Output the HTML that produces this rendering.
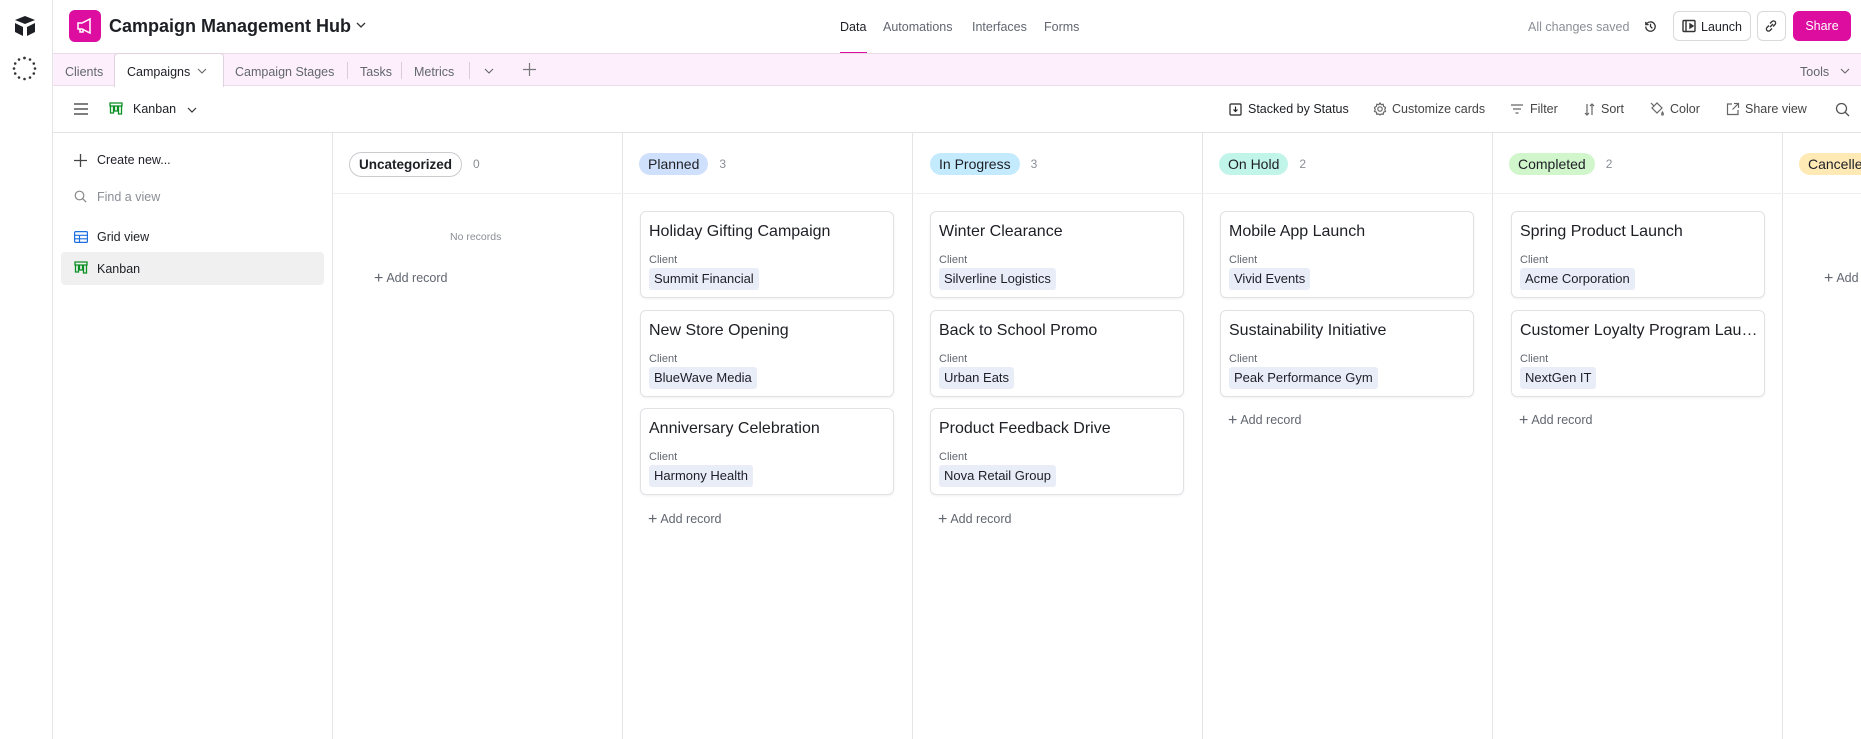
<!DOCTYPE html>
<html><head><meta charset="utf-8">
<style>
*{box-sizing:border-box;margin:0;padding:0}
body{width:1861px;height:739px;overflow:hidden;background:#fff;font-family:"Liberation Sans",sans-serif;color:#1d1f25;position:relative}
.a{position:absolute;white-space:nowrap}
.g{color:#616670}
.card{position:absolute;width:254px;height:87px;border:1px solid #e1e2e5;border-radius:6px;background:#fff;box-shadow:0 1px 2px rgba(0,0,0,.06)}
.card .t{position:absolute;left:8px;top:11px;font-size:16px;color:#1d1f25;width:238px;overflow:hidden;text-overflow:ellipsis;white-space:nowrap}
.card .l{position:absolute;left:8px;top:42px;font-size:11px;color:#616670}
.card .p{position:absolute;left:8px;top:56px;height:22px;line-height:22px;padding:0 5px;background:#e9edf8;border-radius:3px;font-size:13px;white-space:nowrap}
.hd{position:absolute;top:152px;height:24px;display:flex;align-items:center;white-space:nowrap}
.hp{height:22px;line-height:22px;padding:0 9px;border-radius:11px;font-size:14px}
.cnt{margin-left:11px;font-size:12px;color:#8a8e96}
.vl{position:absolute;top:133px;bottom:0;width:1px;background:#e3e4e6}
.add{position:absolute;font-size:12.5px;color:#616670;white-space:nowrap}
.add b{font-weight:normal;font-size:16px;margin-right:3px;vertical-align:-1px}
.tb{font-size:12.5px;color:#444;top:102px}
</style></head><body>
<div class="a" style="left:0;top:0;width:53px;height:739px;border-right:1px solid #e3e4e6"></div>
<svg class="a" style="left:13px;top:15px" width="24" height="22" viewBox="0 0 24 22"><path d="M12 1L2 5l10 4 10-4z" fill="#1d1f25"/><path d="M2 8v9l8 4v-9zM22 8v9l-8 4v-9z" fill="#1d1f25"/></svg>
<svg class="a" style="left:12px;top:56px" width="25" height="25" viewBox="0 0 25 25"><g fill="#333"><circle cx="12.5" cy="2" r="1.4"/><circle cx="18" cy="3.5" r="1.3"/><circle cx="21.8" cy="7.5" r="1.3"/><circle cx="23" cy="12.5" r="1.3"/><circle cx="21.8" cy="17.5" r="1.3"/><circle cx="18" cy="21.5" r="1.3"/><circle cx="12.5" cy="23" r="1.3"/><circle cx="7" cy="21.5" r="1.3"/><circle cx="3.2" cy="17.5" r="1.3"/><circle cx="2" cy="12.5" r="1.3"/><circle cx="3.2" cy="7.5" r="1.3"/><circle cx="7" cy="3.5" r="1.3"/></g></svg>
<div class="a" style="left:69px;top:10px;width:32px;height:32px;background:#dd0da0;border-radius:6px"></div>
<svg class="a" style="left:75px;top:16px" width="20" height="20" viewBox="0 0 20 20" fill="none" stroke="#fff" stroke-width="1.5"><path d="M3 7h4l8-4v14l-8-4H3z"/><path d="M5 13v3h3v-3"/></svg>
<div class="a" style="left:109px;top:16px;font-size:18px;font-weight:bold">Campaign Management Hub</div>
<svg class="a" style="left:356px;top:21px" width="10" height="8" viewBox="0 0 10 8"><path d="M1 2l4 4 4-4" fill="none" stroke="#333" stroke-width="1.3"/></svg>
<div class="a" style="left:840px;top:20px;font-size:12.5px">Data</div>
<div class="a g" style="left:883px;top:20px;font-size:12.5px">Automations</div>
<div class="a g" style="left:972px;top:20px;font-size:12.5px">Interfaces</div>
<div class="a g" style="left:1044px;top:20px;font-size:12.5px">Forms</div>
<div class="a" style="left:840px;top:52px;width:27px;height:2px;background:#dd0da0"></div>
<div class="a" style="left:1528px;top:20px;font-size:12.5px;color:#8a8e96">All changes saved</div>
<svg class="a" style="left:1643px;top:19px" width="15" height="15" viewBox="0 0 16 16" fill="none" stroke="#333" stroke-width="1.4"><path d="M3 8a5 5 0 1 0 1.5-3.5L3 6M3 3v3h3M8 5v3l2 2"/></svg>
<div class="a" style="left:1673px;top:11px;width:78px;height:30px;border:1px solid #d8d9dc;border-radius:6px"></div>
<svg class="a" style="left:1682px;top:19px" width="14" height="14" viewBox="0 0 14 14" fill="none" stroke="#333" stroke-width="1.4"><rect x="1" y="1.5" width="12" height="11" rx="1"/><path d="M4 1.5v11"/><path d="M8 5l3 2-3 2z" fill="#333"/></svg>
<div class="a" style="left:1701px;top:20px;font-size:12.5px">Launch</div>
<div class="a" style="left:1757px;top:11px;width:29px;height:30px;border:1px solid #d8d9dc;border-radius:6px"></div>
<svg class="a" style="left:1764px;top:19px" width="14" height="14" viewBox="0 0 14 14" fill="none" stroke="#333" stroke-width="1.3"><path d="M6 8l3-3M5 6.5L3 8.5a2.1 2.1 0 0 0 3 3L8 9.5M9 7.5l2-2a2.1 2.1 0 0 0-3-3L6 4.5"/></svg>
<div class="a" style="left:1793px;top:11px;width:58px;height:30px;background:#dd0da0;border-radius:6px;color:#fff;font-size:12.5px;text-align:center;line-height:30px">Share</div>
<div class="a" style="left:53px;top:53px;width:1808px;height:33px;background:#fdf0fc;border-top:1px solid #ecdbe9;border-bottom:1px solid #ecdbe9"></div>
<div class="a" style="left:114px;top:53px;width:110px;height:34px;background:#fff;border:1px solid #e0d2de;border-bottom:none;border-radius:4px 4px 0 0"></div>
<div class="a g" style="left:65px;top:65px;font-size:12.5px">Clients</div>
<div class="a" style="left:127px;top:65px;font-size:12.5px">Campaigns</div>
<svg class="a" style="left:197px;top:68px" width="10" height="7" viewBox="0 0 10 7"><path d="M1 1l4 4 4-4" fill="none" stroke="#666" stroke-width="1.1"/></svg>
<div class="a g" style="left:235px;top:65px;font-size:12.5px">Campaign Stages</div>
<div class="a" style="left:347px;top:62px;width:1px;height:17px;background:#dccbd9"></div>
<div class="a g" style="left:360px;top:65px;font-size:12.5px">Tasks</div>
<div class="a" style="left:401px;top:62px;width:1px;height:17px;background:#dccbd9"></div>
<div class="a g" style="left:414px;top:65px;font-size:12.5px">Metrics</div>
<div class="a" style="left:469px;top:62px;width:1px;height:17px;background:#dccbd9"></div>
<svg class="a" style="left:484px;top:68px" width="10" height="7" viewBox="0 0 10 7"><path d="M1 1l4 4 4-4" fill="none" stroke="#666" stroke-width="1.1"/></svg>
<svg class="a" style="left:523px;top:63px" width="13" height="13" viewBox="0 0 13 13"><path d="M6.5 0v13M0 6.5h13" stroke="#777" stroke-width="1.2"/></svg>
<div class="a g" style="left:1800px;top:65px;font-size:12.5px">Tools</div>
<svg class="a" style="left:1840px;top:68px" width="10" height="7" viewBox="0 0 10 7"><path d="M1 1l4 4 4-4" fill="none" stroke="#666" stroke-width="1.1"/></svg>
<div class="a" style="left:53px;top:132px;width:1808px;height:1px;background:#e3e4e6"></div>
<svg class="a" style="left:74px;top:103px" width="14" height="12" viewBox="0 0 14 12"><path d="M0 1h14M0 6h14M0 11h14" stroke="#555" stroke-width="1.4"/></svg>
<svg class="a" style="left:109px;top:102px" width="14" height="14" viewBox="0 0 14 14" fill="none" stroke="#0a8f22" stroke-width="1.3"><path d="M1 1h12v3H1zM1.5 4v7h3V4M5.5 4v5h3V4M9.5 4v8h3V4"/></svg>
<div class="a" style="left:133px;top:102px;font-size:12.5px">Kanban</div>
<svg class="a" style="left:187px;top:107px" width="10" height="7" viewBox="0 0 10 7"><path d="M1 1l4 4 4-4" fill="none" stroke="#333" stroke-width="1.2"/></svg>
<svg class="a" style="left:1229px;top:103px" width="13" height="13" viewBox="0 0 13 13" fill="none" stroke="#222" stroke-width="1.2"><rect x="1" y="1" width="11" height="11" rx="1"/><path d="M6.5 3.5v5M4.5 6.5l2 2 2-2"/></svg>
<div class="a tb" style="left:1248px;color:#1d1f25">Stacked by Status</div>
<svg class="a" style="left:1373px;top:102px" width="14" height="14" viewBox="0 0 14 14" fill="none" stroke="#666" stroke-width="1.2"><circle cx="7" cy="7" r="2.2"/><path d="M7 1l1.2 1.6 2-.3.3 2L12.5 5.5 11.8 7.4 12.5 9.3 10.5 10.3l-.3 2-2-.3L7 13 5.8 12l-2 .3-.3-2L1.5 9.3 2.2 7.4 1.5 5.5 3.5 4.3l.3-2 2 .3z"/></svg>
<div class="a tb g" style="left:1392px">Customize cards</div>
<svg class="a" style="left:1510px;top:104px" width="14" height="10" viewBox="0 0 14 10"><path d="M1 1h12M3 5h8M5.5 9h3" stroke="#666" stroke-width="1.3"/></svg>
<div class="a tb g" style="left:1530px">Filter</div>
<svg class="a" style="left:1583px;top:103px" width="13" height="13" viewBox="0 0 13 13" fill="none" stroke="#666" stroke-width="1.2"><path d="M4 1v11M2 10l2 2 2-2M9 12V1M7 3l2-2 2 2"/></svg>
<div class="a tb g" style="left:1601px">Sort</div>
<svg class="a" style="left:1650px;top:102px" width="15" height="15" viewBox="0 0 15 15" fill="none" stroke="#666" stroke-width="1.2"><path d="M2 6l5-5 5 5-5 5zM1 1l3 3M12.5 10c1 1.5 1 3 0 3s-1-1.5 0-3z"/></svg>
<div class="a tb g" style="left:1670px">Color</div>
<svg class="a" style="left:1726px;top:102px" width="14" height="14" viewBox="0 0 14 14" fill="none" stroke="#666" stroke-width="1.2"><path d="M6 2H1.5v10.5H12V8M8 1.5h4.5V6M12.5 1.5L6.5 7.5"/></svg>
<div class="a tb g" style="left:1745px">Share view</div>
<svg class="a" style="left:1835px;top:102px" width="15" height="15" viewBox="0 0 15 15" fill="none" stroke="#555" stroke-width="1.3"><circle cx="6.5" cy="6.5" r="5"/><path d="M10 10l4 4"/></svg>
<svg class="a" style="left:74px;top:154px" width="13" height="13" viewBox="0 0 13 13"><path d="M6.5 0v13M0 6.5h13" stroke="#444" stroke-width="1.3"/></svg>
<div class="a" style="left:97px;top:153px;font-size:12.5px">Create new...</div>
<svg class="a" style="left:74px;top:190px" width="13" height="13" viewBox="0 0 13 13" fill="none" stroke="#888" stroke-width="1.2"><circle cx="5.5" cy="5.5" r="4.3"/><path d="M8.7 8.7l3.5 3.5"/></svg>
<div class="a" style="left:97px;top:190px;font-size:12.5px;color:#8a8e96">Find a view</div>
<svg class="a" style="left:74px;top:231px" width="14" height="12" viewBox="0 0 14 12" fill="none" stroke="#1f6fe0" stroke-width="1.2"><rect x=".6" y=".6" width="12.8" height="10.8" rx="1"/><path d="M.6 4.3h12.8M.6 7.8h12.8M5.5 4.3v7"/></svg>
<div class="a" style="left:97px;top:230px;font-size:12.5px">Grid view</div>
<div class="a" style="left:61px;top:252px;width:263px;height:33px;background:#f0f0f1;border-radius:4px"></div>
<svg class="a" style="left:74px;top:261px" width="14" height="14" viewBox="0 0 14 14" fill="none" stroke="#0a8f22" stroke-width="1.3"><path d="M1 1h12v3H1zM1.5 4v7h3V4M5.5 4v5h3V4M9.5 4v8h3V4"/></svg>
<div class="a" style="left:97px;top:262px;font-size:12.5px">Kanban</div>
<div class="vl" style="left:332px"></div>
<div class="vl" style="left:622px"></div>
<div class="vl" style="left:912px"></div>
<div class="vl" style="left:1202px"></div>
<div class="vl" style="left:1492px"></div>
<div class="vl" style="left:1782px"></div>
<div class="a" style="left:333px;top:193px;width:1528px;height:1px;background:#eeeff1"></div>

<div class="hd" style="left:349px"><div class="hp" style="height:25px;line-height:23px;border:1px solid #c9cbcf;border-radius:13px;font-weight:bold;font-size:13.5px">Uncategorized</div><div class="cnt">0</div></div>
<div class="a" style="left:450px;top:231px;font-size:10.5px;color:#8a8e96">No records</div>
<div class="add" style="left:374px;top:270px"><b>+</b>Add record</div>

<div class="hd" style="left:639px"><div class="hp" style="background:#cfe0fc">Planned</div><div class="cnt">3</div></div>
<div class="hd" style="left:930px"><div class="hp" style="background:#c4ebfd">In Progress</div><div class="cnt">3</div></div>
<div class="hd" style="left:1219px"><div class="hp" style="background:#c2f5ea">On Hold</div><div class="cnt">2</div></div>
<div class="hd" style="left:1509px"><div class="hp" style="background:#d1f6cb">Completed</div><div class="cnt">2</div></div>
<div class="hd" style="left:1799px"><div class="hp" style="background:#ffe9b5;padding-right:20px">Cancelled</div></div>

<div class="card" style="left:640px;top:211px"><div class="t">Holiday Gifting Campaign</div><div class="l">Client</div><div class="p">Summit Financial</div></div>
<div class="card" style="left:640px;top:310px"><div class="t">New Store Opening</div><div class="l">Client</div><div class="p">BlueWave Media</div></div>
<div class="card" style="left:640px;top:408px"><div class="t">Anniversary Celebration</div><div class="l">Client</div><div class="p">Harmony Health</div></div>
<div class="add" style="left:648px;top:511px"><b>+</b>Add record</div>

<div class="card" style="left:930px;top:211px"><div class="t">Winter Clearance</div><div class="l">Client</div><div class="p">Silverline Logistics</div></div>
<div class="card" style="left:930px;top:310px"><div class="t">Back to School Promo</div><div class="l">Client</div><div class="p">Urban Eats</div></div>
<div class="card" style="left:930px;top:408px"><div class="t">Product Feedback Drive</div><div class="l">Client</div><div class="p">Nova Retail Group</div></div>
<div class="add" style="left:938px;top:511px"><b>+</b>Add record</div>

<div class="card" style="left:1220px;top:211px"><div class="t">Mobile App Launch</div><div class="l">Client</div><div class="p">Vivid Events</div></div>
<div class="card" style="left:1220px;top:310px"><div class="t">Sustainability Initiative</div><div class="l">Client</div><div class="p">Peak Performance Gym</div></div>
<div class="add" style="left:1228px;top:412px"><b>+</b>Add record</div>

<div class="card" style="left:1511px;top:211px"><div class="t">Spring Product Launch</div><div class="l">Client</div><div class="p">Acme Corporation</div></div>
<div class="card" style="left:1511px;top:310px"><div class="t">Customer Loyalty Program Launch</div><div class="l">Client</div><div class="p">NextGen IT</div></div>
<div class="add" style="left:1519px;top:412px"><b>+</b>Add record</div>

<div class="add" style="left:1824px;top:270px"><b>+</b>Add record</div>
</body></html>
